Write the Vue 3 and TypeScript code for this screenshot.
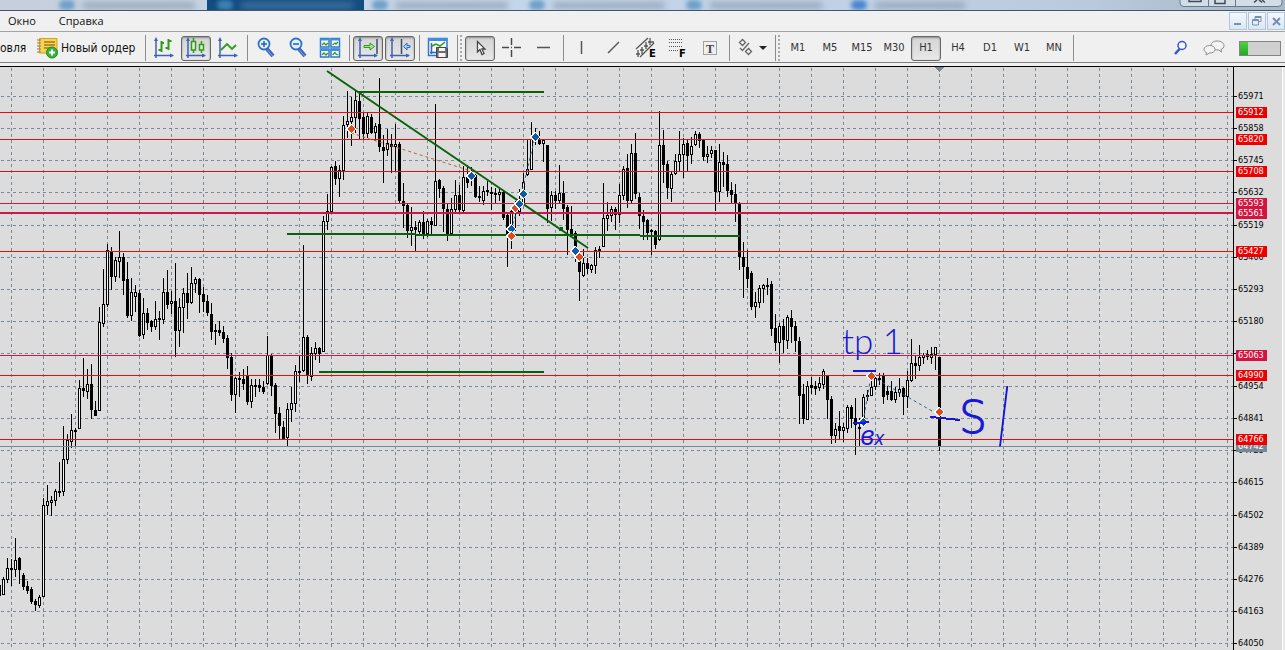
<script setup lang="ts">
import { ref } from 'vue'

type Candle = [high: number, top: number, bottom: number, low: number, up: 0 | 1]

interface Level { y: number; label: string; kind: 'red' | 'crimson' | 'slate'; wide?: boolean }
interface Marker { x: number; y: number; kind: 'sell' | 'buy' }

const menus = ['Окно', 'Справка']
const frames = ['M1', 'M5', 'M15', 'M30', 'H1', 'H4', 'D1', 'W1', 'MN']
const frame = ref('H1')

// Vertical positions are in chart space; the plot starts at 67.
const plotTop = 67
const step = 4
const firstX = -1

const candles: Candle[] = [
  [583, 585, 595, 597, 0], [577, 579, 594, 594, 1], [558, 568, 579, 582, 1], [559, 568, 569, 585, 0],
  [538, 560, 569, 576, 1], [557, 558, 569, 583, 0], [573, 575, 586, 589, 0], [581, 586, 590, 593, 0],
  [587, 589, 601, 603, 0], [599, 601, 604, 610, 0], [595, 597, 605, 607, 1], [498, 505, 596, 596, 1],
  [485, 501, 505, 514, 1], [496, 500, 502, 515, 1], [489, 491, 500, 505, 1], [462, 491, 492, 496, 0],
  [426, 459, 491, 495, 1], [434, 440, 459, 463, 1], [414, 430, 441, 447, 1], [428, 430, 431, 446, 0],
  [380, 388, 428, 428, 1], [358, 388, 390, 396, 0], [369, 384, 391, 398, 1], [364, 384, 409, 418, 0],
  [401, 410, 415, 415, 0], [307, 322, 410, 410, 1], [269, 304, 323, 326, 1], [244, 250, 304, 306, 1],
  [247, 251, 276, 289, 0], [257, 260, 276, 281, 1], [231, 257, 261, 277, 1], [253, 257, 280, 294, 0],
  [262, 279, 315, 317, 0], [278, 292, 315, 320, 1], [285, 292, 296, 311, 1], [290, 293, 335, 336, 0],
  [298, 313, 334, 338, 1], [308, 313, 322, 329, 0], [320, 321, 326, 331, 0], [301, 319, 326, 329, 1],
  [311, 318, 319, 339, 0], [278, 292, 319, 323, 1], [270, 292, 304, 308, 0], [291, 301, 303, 313, 1],
  [263, 301, 330, 356, 0], [298, 307, 330, 346, 1], [288, 293, 307, 332, 1], [273, 293, 302, 318, 0],
  [267, 283, 302, 303, 1], [277, 279, 283, 292, 1], [278, 279, 294, 312, 0], [287, 294, 301, 311, 0],
  [295, 301, 312, 315, 0], [303, 314, 331, 339, 0], [324, 330, 331, 344, 0], [321, 330, 332, 335, 0],
  [326, 332, 338, 342, 0], [335, 338, 357, 368, 0], [353, 357, 394, 400, 0], [377, 378, 394, 412, 1],
  [372, 378, 379, 396, 0], [369, 379, 383, 389, 0], [366, 375, 401, 404, 0], [379, 385, 401, 407, 1],
  [379, 385, 386, 396, 0], [379, 385, 387, 391, 0], [381, 387, 391, 393, 0], [336, 355, 383, 384, 1],
  [354, 355, 385, 395, 0], [383, 385, 413, 432, 0], [407, 413, 425, 439, 0], [421, 427, 438, 439, 0],
  [403, 409, 437, 445, 1], [387, 403, 409, 421, 1], [365, 371, 403, 411, 1], [355, 371, 372, 381, 0],
  [245, 337, 370, 371, 1], [335, 337, 375, 383, 0], [347, 353, 376, 380, 1], [342, 348, 353, 359, 1],
  [347, 348, 353, 362, 0], [216, 221, 351, 351, 1], [194, 211, 221, 229, 1], [166, 167, 211, 212, 1],
  [161, 166, 178, 184, 0], [165, 170, 178, 196, 1], [116, 125, 170, 179, 1], [91, 121, 124, 137, 1],
  [97, 117, 121, 145, 1], [91, 100, 117, 132, 1], [93, 101, 118, 139, 0], [113, 117, 133, 138, 0],
  [113, 116, 133, 137, 1], [114, 117, 132, 133, 0], [123, 126, 132, 140, 1], [78, 124, 146, 151, 0],
  [135, 147, 150, 182, 0], [129, 143, 149, 155, 1], [134, 144, 146, 172, 0], [124, 144, 146, 170, 1],
  [142, 144, 200, 202, 0], [183, 201, 205, 227, 0], [204, 205, 230, 237, 0], [207, 227, 230, 245, 1],
  [221, 227, 229, 251, 0], [220, 222, 231, 234, 1], [211, 222, 233, 238, 0], [219, 221, 233, 236, 1],
  [217, 221, 224, 233, 0], [104, 181, 225, 225, 1], [179, 180, 188, 197, 0], [186, 188, 208, 231, 0],
  [204, 209, 234, 240, 0], [198, 209, 233, 234, 1], [180, 195, 209, 211, 1], [185, 195, 209, 213, 0],
  [166, 177, 210, 212, 1], [165, 176, 182, 187, 0], [167, 174, 178, 185, 1], [174, 175, 196, 197, 0],
  [186, 196, 197, 201, 0], [186, 191, 200, 204, 1], [181, 190, 191, 195, 0], [187, 192, 193, 209, 0],
  [188, 193, 194, 203, 0], [188, 192, 194, 200, 1], [190, 192, 217, 219, 0], [213, 215, 235, 266, 0],
  [208, 211, 234, 248, 1], [201, 209, 212, 230, 1], [189, 204, 211, 215, 1], [173, 182, 203, 204, 1],
  [140, 169, 174, 175, 1], [122, 139, 169, 169, 1], [128, 138, 140, 144, 0], [131, 140, 143, 144, 0],
  [139, 140, 143, 161, 1], [145, 145, 208, 222, 0], [191, 195, 207, 220, 1], [191, 195, 200, 208, 0],
  [165, 193, 200, 203, 1], [181, 193, 208, 219, 0], [205, 207, 229, 254, 0], [206, 229, 233, 235, 0],
  [231, 233, 249, 261, 0], [252, 257, 271, 300, 0], [249, 263, 275, 276, 1], [258, 263, 268, 273, 0],
  [264, 265, 269, 272, 1], [247, 250, 265, 273, 1], [246, 249, 250, 257, 0], [183, 218, 246, 246, 1],
  [202, 215, 218, 230, 1], [206, 209, 215, 221, 1], [207, 209, 214, 229, 0], [184, 195, 214, 222, 1],
  [166, 169, 195, 199, 1], [154, 168, 200, 207, 0], [144, 153, 200, 202, 1], [133, 153, 193, 198, 0],
  [193, 197, 215, 228, 0], [210, 216, 221, 239, 0], [219, 220, 232, 239, 0], [229, 230, 231, 254, 0],
  [230, 231, 244, 248, 0], [111, 145, 239, 240, 1], [130, 145, 164, 182, 0], [161, 164, 187, 198, 0],
  [171, 174, 188, 201, 1], [154, 161, 173, 174, 1], [131, 154, 161, 171, 1], [138, 144, 154, 177, 1],
  [139, 143, 155, 171, 0], [137, 146, 154, 163, 1], [131, 134, 144, 145, 1], [132, 134, 140, 147, 0],
  [140, 140, 156, 160, 0], [146, 154, 156, 162, 1], [146, 150, 153, 157, 1], [150, 150, 191, 210, 0],
  [144, 162, 191, 201, 1], [152, 162, 164, 186, 0], [155, 164, 190, 196, 0], [182, 190, 194, 203, 0],
  [184, 194, 203, 221, 0], [202, 204, 256, 269, 0], [242, 257, 266, 297, 0], [250, 267, 278, 287, 0],
  [271, 273, 306, 309, 0], [292, 302, 306, 317, 1], [285, 288, 302, 307, 1], [284, 285, 288, 302, 1],
  [278, 285, 286, 294, 0], [281, 284, 328, 335, 0], [314, 328, 342, 350, 0], [323, 326, 342, 362, 1],
  [319, 326, 339, 352, 0], [315, 317, 340, 348, 1], [310, 318, 326, 342, 0], [321, 326, 340, 351, 0],
  [337, 341, 395, 423, 0], [384, 394, 418, 423, 0], [381, 386, 419, 419, 1], [377, 385, 387, 393, 0],
  [381, 386, 388, 394, 0], [377, 383, 387, 390, 1], [369, 371, 384, 388, 1], [375, 376, 399, 418, 0],
  [396, 399, 435, 443, 0], [423, 429, 435, 442, 1], [411, 426, 430, 438, 0], [423, 427, 430, 441, 1],
  [405, 407, 428, 432, 1], [405, 407, 418, 427, 0], [398, 418, 424, 454, 0], [418, 427, 428, 446, 0],
  [394, 397, 425, 425, 1], [390, 395, 396, 400, 0], [377, 387, 395, 395, 1], [375, 378, 386, 389, 1],
  [373, 378, 379, 384, 0], [373, 375, 396, 403, 0], [386, 391, 394, 399, 0], [381, 391, 399, 400, 0],
  [387, 392, 399, 402, 1], [378, 389, 392, 396, 1], [387, 388, 396, 414, 0], [371, 380, 396, 407, 1],
  [339, 363, 380, 381, 1], [356, 363, 365, 378, 0], [345, 357, 365, 370, 1], [353, 355, 357, 363, 1],
  [350, 354, 356, 359, 0], [347, 354, 357, 363, 1], [347, 347, 354, 369, 1], [357, 357, 446, 450, 0],
]

const scale = [
  [96, '65971'], [128, '65858'], [160, '65745'], [192, '65632'], [225, '65519'], [257, '65406'],
  [289, '65293'], [321, '65180'], [353, ''], [386, '64954'], [418, '64841'], [450, '64728'],
  [482, '64615'], [515, '64502'], [547, '64389'], [579, '64276'], [611, '64163'], [643, '64050'],
] as [number, string][]

const gridX = Array.from({ length: 80 }, (_, i) => 11 + i * 32)

const levels: Level[] = [
  { y: 446, label: '64742', kind: 'slate' },
  { y: 112, label: '65912', kind: 'red' },
  { y: 139, label: '65820', kind: 'red' },
  { y: 171, label: '65708', kind: 'red' },
  { y: 203, label: '65593', kind: 'crimson' },
  { y: 213, label: '65561', kind: 'crimson', wide: true },
  { y: 251, label: '65427', kind: 'red' },
  { y: 355, label: '65063', kind: 'crimson' },
  { y: 375, label: '64990', kind: 'red' },
  { y: 439, label: '64766', kind: 'red' },
]

const markers: Marker[] = [
  { x: 351, y: 129, kind: 'sell' }, { x: 471, y: 176, kind: 'buy' }, { x: 511, y: 229, kind: 'buy' },
  { x: 511, y: 236, kind: 'sell' }, { x: 515, y: 208, kind: 'sell' }, { x: 519, y: 204, kind: 'buy' },
  { x: 523, y: 194, kind: 'buy' }, { x: 535, y: 137, kind: 'buy' }, { x: 575, y: 251, kind: 'buy' },
  { x: 579, y: 257, kind: 'sell' }, { x: 871, y: 376, kind: 'sell' }, { x: 863, y: 422, kind: 'buy' },
  { x: 939, y: 412, kind: 'sell' },
]

const cx = (i: number) => firstX + i * step
</script>

<template>
  <div class="terminal">
    <div class="glass" aria-hidden="true">
      <span class="tab t1"><i></i><b></b></span>
      <span class="tab t2"><i></i><b></b></span>
      <span class="tab t3"><i></i><b></b></span>
      <span class="tab t3"><i></i><b></b></span>
      <span class="tab t3"><i></i><b></b></span>
      <span class="tab t4"><i></i><b></b></span>
      <span class="frost"></span>
      <svg class="caption" width="104" height="8" viewBox="0 0 104 8">
        <path d="M1 0V3Q1 6.500 5 6.500H99Q103 6.500 103 3V0M29.500 0V6M56.500 0V6" fill="#d3dde8" stroke="#66788c" />
        <path d="M10 0V1.500H22V0M36 0V3.500H46V0M75 2.500L78 0M80 0L83 2.500M83 0L86 2.500" fill="none" stroke="#3d4a58" stroke-width="1.500" />
      </svg>
    </div>

    <nav class="menu">
      <button v-for="m in menus" :key="m" type="button" class="menu-item">{{ m }}</button>
      <div class="mdi">
        <button type="button" aria-label="Свернуть"><svg width="16" height="16"><path d="M4 11h7" stroke="#7690b4" stroke-width="2" /></svg></button>
        <button type="button" aria-label="Восстановить"><svg width="16" height="16"><path d="M6 6V3.500H12V8.500H10M3.500 6.500H9.500V12H3.500ZM3.500 7.500H9.500M6 4.500H12" fill="none" stroke="#7690b4" /></svg></button>
        <button type="button" aria-label="Закрыть"><svg width="16" height="16"><path d="M5 5L12 12M12 5L5 12" stroke="#7690b4" stroke-width="2" /></svg></button>
      </div>
    </nav>

    <div class="toolbar">
      <button type="button" class="wide cut">овля</button>
      <button type="button" class="wide order">
        <svg width="22" height="22" viewBox="0 0 22 22">
          <path d="M2.500 1.500H20V16H2.500Z" fill="#f7d354" stroke="#d3a01f" />
          <path d="M0 3h4M0 6h4M0 9h4M0 12h4M0 15h4" stroke="#98793a" />
          <path d="M7 5h11M7 8h11M7 11h6" stroke="#a6781e" stroke-width="1.500" />
          <circle cx="15" cy="15.500" r="5.500" fill="#35b53a" stroke="#198b20" />
          <path d="M15 12.500V18.500M12 15.500H18" stroke="#fff" stroke-width="2" />
        </svg>
        <span>Новый ордер</span>
      </button>
      <span class="sep"></span>

      <button type="button" class="tool" aria-label="Бары">
        <svg width="22" height="22" viewBox="0 0 22 22">
          <path d="M3 2V21M1 18.500H20" stroke="#3e62b4" stroke-width="1.500" /><path d="M3 0L5 4H1ZM21 18.500L17 16.500V20.500Z" fill="#3e62b4" />
          <path d="M8.500 4V15M5.500 13H8.500M8.500 6H11M15.500 2V13M12.500 11H15.500M15.500 4H18.500" fill="none" stroke="#2f9a1c" stroke-width="2" />
        </svg>
      </button>
      <button type="button" class="tool on" aria-label="Свечи">
        <svg width="22" height="22" viewBox="0 0 22 22">
          <path d="M3 2V21M1 18.500H20" stroke="#3e62b4" stroke-width="1.500" /><path d="M3 0L5 4H1ZM21 18.500L17 16.500V20.500Z" fill="#3e62b4" />
          <path d="M8.500 1V4M8.500 13V16M16.500 4V7M16.500 13V16M6.500 4.500H10.500V13H6.500ZM14.500 7.500H18.500V13H14.500Z" fill="#dff2d8" stroke="#2f9a1c" stroke-width="1.500" />
        </svg>
      </button>
      <button type="button" class="tool" aria-label="Линия">
        <svg width="22" height="22" viewBox="0 0 22 22">
          <path d="M3 2V21M1 18.500H20" stroke="#3e62b4" stroke-width="1.500" /><path d="M3 0L5 4H1ZM21 18.500L17 16.500V20.500Z" fill="#3e62b4" />
          <path d="M4 13L10 7L15 12L19 8" fill="none" stroke="#2f9a1c" stroke-width="1.800" />
        </svg>
      </button>
      <span class="sep"></span>

      <button type="button" class="tool" aria-label="Увеличить">
        <svg width="22" height="22" viewBox="0 0 22 22">
          <path d="M12 12L18 19" stroke="#3b62b5" stroke-width="4" /><path d="M12.500 13L17.500 19" stroke="#8aa6dc" />
          <circle cx="9" cy="7" r="5.500" fill="#e1f1ff" stroke="#2f71c3" stroke-width="1.800" />
          <path d="M9 4V10M6 7H12" stroke="#2a5bb0" stroke-width="1.500" />
        </svg>
      </button>
      <button type="button" class="tool" aria-label="Уменьшить">
        <svg width="22" height="22" viewBox="0 0 22 22">
          <path d="M12 12L18 19" stroke="#3b62b5" stroke-width="4" /><path d="M12.500 13L17.500 19" stroke="#8aa6dc" />
          <circle cx="9" cy="7" r="5.500" fill="#e1f1ff" stroke="#2f71c3" stroke-width="1.800" />
          <path d="M6 7H12" stroke="#2a5bb0" stroke-width="1.500" />
        </svg>
      </button>
      <button type="button" class="tool" aria-label="Плитка">
        <svg width="22" height="22" viewBox="0 0 22 22">
          <path d="M1.500 1.500H10V10H1.500ZM12 1.500H20.500V10H12ZM1.500 12H10V20H1.500ZM12 12H20.500V20H12Z" fill="#fff" stroke="#2d78c8" stroke-width="1.500" />
          <path d="M1 2.500H10.500M11.500 2.500H21M1 13H10.500M11.500 13H21" stroke="#3c8fe0" stroke-width="2" />
          <path d="M3 8L5 6L7 8L9 6M13.500 8L16 6L17 7L19 5M3 18L5 16L7 18L9 16M13.500 18L16 15.500L17 17L19 18" fill="none" stroke="#2f9a1c" stroke-width="1.300" />
        </svg>
      </button>
      <span class="sep"></span>

      <button type="button" class="tool on" aria-label="Автопрокрутка">
        <svg width="22" height="22" viewBox="0 0 22 22">
          <path d="M3 2V21M1 18.500H20" stroke="#3e62b4" stroke-width="1.500" /><path d="M3 0L5 4H1ZM21 18.500L17 16.500V20.500Z" fill="#3e62b4" />
          <path d="M20 2V17" stroke="#3c4c66" stroke-width="1.500" />
          <path d="M7 8.500H13V6L17.500 9.500L13 13V10.500H7Z" fill="#a9e49a" stroke="#2f9a1c" />
        </svg>
      </button>
      <button type="button" class="tool on" aria-label="Сдвиг графика">
        <svg width="22" height="22" viewBox="0 0 22 22">
          <path d="M3 2V21M1 18.500H20" stroke="#3e62b4" stroke-width="1.500" /><path d="M3 0L5 4H1ZM21 18.500L17 16.500V20.500Z" fill="#3e62b4" />
          <path d="M12.500 2V17" stroke="#3c4c66" stroke-width="1.500" />
          <path d="M21 8.500H18V6L14.500 9.500L18 13V10.500H21Z" fill="#a7cdf8" stroke="#2f6fc4" />
        </svg>
      </button>
      <span class="sep"></span>
      <button type="button" class="tool" aria-label="Шаблоны">
        <svg width="22" height="22" viewBox="0 0 22 22">
          <path d="M1.500 1.500H20V18.500H1.500Z" fill="#f3f9ff" stroke="#2d78c8" stroke-width="1.500" /><path d="M1 2.500H20.500" stroke="#3c8fe0" stroke-width="3" />
          <path d="M4.500 6V17M3 15.500H9" stroke="#3e62b4" stroke-width="1.500" /><path d="M5 9L9 7L13 9L18 5" fill="none" stroke="#2f9a1c" stroke-width="1.500" />
          <path d="M9.500 10.500H19L20.500 12V20.500H9.500Z" fill="#6d6d6d" stroke="#444" /><path d="M12 11H18V14H12ZM11.500 16H18.500V20H11.500Z" fill="#f4f4f4" />
        </svg>
      </button>
      <span class="sep"></span>
      <span class="grip"></span>

      <button type="button" class="tool on" aria-label="Курсор">
        <svg width="22" height="22" viewBox="0 0 22 22"><path d="M8.500 4.500V15L11 12.500L13 17.500L15 16.500L13 12H16Z" fill="#fff" stroke="#444" stroke-width="1.300" /></svg>
      </button>
      <button type="button" class="tool" aria-label="Перекрестие">
        <svg width="22" height="22" viewBox="0 0 22 22"><path d="M10.500 1V8M10.500 13V20M1 10.500H8M13 10.500H20M10 10.500h1" stroke="#4a4a4a" stroke-width="1.500" /></svg>
      </button>
      <button type="button" class="tool" aria-label="Горизонтальная линия">
        <svg width="22" height="22" viewBox="0 0 22 22"><path d="M4 10.500H17" stroke="#555" stroke-width="1.500" /></svg>
      </button>
      <span class="sep"></span>
      <button type="button" class="tool" aria-label="Вертикальная линия">
        <svg width="22" height="22" viewBox="0 0 22 22"><path d="M10.500 4V17" stroke="#555" stroke-width="1.500" /></svg>
      </button>
      <button type="button" class="tool" aria-label="Трендовая линия">
        <svg width="22" height="22" viewBox="0 0 22 22"><path d="M5 16L16 5" stroke="#555" stroke-width="1.500" /></svg>
      </button>
      <button type="button" class="tool" aria-label="Равноудаленный канал">
        <svg width="22" height="22" viewBox="0 0 22 22">
          <path d="M1 12L13 1M5 20L19 6M3 13V20M1 17H5M7 10V17M5 13H9M11 5V12M9 9H13M15 1V8M13 5H19" fill="none" stroke="#555" stroke-width="1.300" />
          <text x="14" y="20" class="glyph">E</text>
        </svg>
      </button>
      <button type="button" class="tool" aria-label="Фибоначчи">
        <svg width="22" height="22" viewBox="0 0 22 22">
          <path d="M2 2.500H15M2 5.500H15M2 9.500H15M2 13.500H11" stroke="#555" stroke-dasharray="1 1" />
          <text x="12" y="20" class="glyph">F</text>
        </svg>
      </button>
      <button type="button" class="tool" aria-label="Текст">
        <svg width="22" height="22" viewBox="0 0 22 22">
          <rect x="4.500" y="4.500" width="13" height="13" fill="none" stroke="#555" stroke-dasharray="1 1" />
          <text x="11" y="16" text-anchor="middle" class="serif">T</text>
        </svg>
      </button>
      <span class="sep"></span>
      <button type="button" class="tool drop" aria-label="Стрелки">
        <svg width="34" height="22" viewBox="0 0 34 22">
          <path d="M4.500 4.500L7.500 1.500L10.500 4.500L7.500 7.500ZM5 10L7.500 12.500L14 5M10.500 13.500L13.500 10.500L16.500 13.500L13.500 16.500Z" transform="translate(0 1)" fill="none" stroke="#666" stroke-width="1.300" />
          <path d="M24 9H32L28 13Z" fill="#222" />
        </svg>
      </button>
      <span class="sep"></span>
      <span class="grip"></span>

      <button
        v-for="f in frames" :key="f" type="button" class="tool frame" :class="{ on: f === frame }"
        @click="frame = f"
      >{{ f }}</button>
      <span class="sep"></span>

      <div class="status">
        <button type="button" aria-label="Поиск">
          <svg width="16" height="16" viewBox="0 0 16 16">
            <path d="M2 14L7 8.500" stroke="#3159c4" stroke-width="2.500" /><circle cx="9" cy="5.500" r="4" fill="#f2f7ff" stroke="#3159c4" stroke-width="1.500" />
          </svg>
        </button>
        <button type="button" aria-label="Чат">
          <svg width="22" height="16" viewBox="0 0 22 16">
            <path d="M14 1C18 1 21 3 21 5.500C21 7.500 19.500 9 18 9.500L18.500 12L15.500 10C11 10 8 8 8 5.500C8 3 10.500 1 14 1Z" fill="#f4f4f4" stroke="#8a8a8a" />
            <path d="M6.500 5.500C10 5.500 12 7 12 9.500C12 12 9.500 13 6.500 13L3 15L3.500 12.500C2 12 1 11 1 9.500C1 7 3.500 5.500 6.500 5.500Z" fill="#f4f4f4" stroke="#8a8a8a" />
          </svg>
        </button>
        <span class="meter"><span></span></span>
      </div>
    </div>

    <main class="chart">
      <svg class="plot" role="img" aria-label="График цены, H1">
        <g :transform="`translate(0 ${-plotTop})`">
          <g class="grid">
            <line v-for="x in gridX" :key="'x' + x" :x1="x" :x2="x" :y1="plotTop" y2="2000" />
            <line v-for="[y] in scale" :key="'y' + y" x1="0" x2="100%" :y1="y" :y2="y" />
          </g>

          <g class="candles">
            <template v-for="(c, i) in candles" :key="i">
              <rect :x="cx(i)" :y="c[0]" width="1" :height="c[3] - c[0] + 1" />
              <rect :x="cx(i) - 1" :y="c[1]" width="3" :height="c[2] - c[1] + 1" />
              <rect v-if="c[4] && c[2] - c[1] > 1" class="hollow" :x="cx(i)" :y="c[1] + 1" width="1" :height="c[2] - c[1] - 1" />
            </template>
          </g>

          <rect
            v-for="l in levels" :key="l.label" x="0" :y="l.wide ? l.y - 1 : l.y" width="100%"
            :height="l.wide ? 2 : 1" :class="l.kind"
          />

          <g class="green">
            <path d="M358 92H544M319 372H544M287 234H416M416 235H640M640 236H740" />
            <path class="trend" d="M327 71L588 248" />
            <circle cx="561" cy="229" r="2" />
          </g>

          <path class="link sold" d="M351 133L471 171" />
          <path class="link bought" d="M511 230L519 204L535 137M863 422L871 376L939 415" />

          <path class="shift" d="M934 67H944L939 72Z" />

          <g v-for="(m, i) in markers" :key="i" :transform="`translate(${m.x} ${m.y})`" :class="m.kind">
            <path class="halo" d="M0 -5L5 0L0 5L-5 0Z" />
            <path d="M0 -4L4 0L0 4L-4 0Z" />
          </g>

          <g class="ink">
            <path d="M853 371H876M853 423L862 423L869 422M930 417L941 418L960 420" />
            <text x="842" y="354" class="note">tp 1</text>
            <text x="860" y="445" class="entry"><tspan class="big">в</tspan>х</text>
            <text x="959" y="433" class="stop">S</text>
            <text x="995" y="446" class="stem">l</text>
          </g>
        </g>
      </svg>

      <div class="axis">
        <template v-for="[y, label] in scale" :key="y">
          <span class="price" :style="{ top: y - plotTop - 5 + 'px' }">{{ label }}</span>
        </template>
        <span
          v-for="l in levels" :key="l.label" class="price tag" :class="l.kind"
          :style="{ top: l.y - plotTop - 5 + 'px' }"
        >{{ l.label }}</span>
      </div>
      <div class="edge"></div>
    </main>
  </div>
</template>

<style>
html, body { margin: 0; height: 100%; overflow: hidden; }
#app { height: 100%; }
</style>

<style scoped>
.terminal {
  display: flex;
  flex-direction: column;
  height: 100%;
  background: #f0f0f0;
  color: #111;
  font: 11px/16px "Open Sans", "Noto Sans", sans-serif;
}
button { border: 0; padding: 0; margin: 0; background: none; color: inherit; font: inherit; }
svg { display: block; }

.glass {
  position: relative;
  display: flex;
  flex: none;
  height: 10px;
  overflow: hidden;
  background: linear-gradient(90deg, #c6d0dc, #c4d6ea 40%, #bfd0e4 70%, #b4c4d4);
  border-bottom: 1px solid #44566f;
}
.tab { display: flex; align-items: center; gap: 8px; width: 158px; }
.tab i { width: 16px; height: 10px; border-radius: 5px; background: #6fa0c8; filter: blur(2px); }
.tab b { width: 112px; height: 5px; background: #8f9fb2; filter: blur(3px); }
.t1 { width: 148px; padding-left: 59px; }
.t2 { width: 147px; padding-left: 10px; background: #134d80; }
.t2 i { background: #3f7fb0; }
.t2 b { background: #4a7aa5; }
.t3 { width: 149px; padding-left: 8px; }
.t4 { width: 240px; padding-left: 16px; }
.t4 b { width: 90px; }
.t4 i { background: #4a86cf; }
.frost { flex: 1; background: linear-gradient(90deg, #b4c4d400, #a9b9ca); }
.caption { position: absolute; right: 2px; top: 0; }

.menu { display: flex; flex: none; height: 20px; background: #f0f0f0; border-bottom: 1px solid #a3a3a3; }
.menu-item { margin-left: 8px; margin-right: 15px; }
.mdi { display: flex; gap: 1px; margin-left: auto; padding-top: 1px; }
.mdi button { width: 18px; height: 18px; background: linear-gradient(#f3f8fd, #dbe7f5); border: 1px solid #b2c6de; }

.toolbar { display: flex; flex: none; align-items: center; height: 28px; padding-top: 2px; background: #f0f0f0; border-bottom: 1px solid #808080; }
.wide { height: 26px; white-space: nowrap; font: 12px/26px "DejaVu Sans Condensed", "DejaVu Sans", sans-serif; }
.cut { width: 37px; text-align: left; }
.order { display: flex; align-items: center; gap: 2px; width: 105px; }
.sep { flex: none; width: 1px; height: 26px; margin: 0 2px 0 3px; background: #8c8c8c; }
.grip { flex: none; width: 2px; height: 26px; margin-right: 2px; background: repeating-linear-gradient(#a8a8a8 0 2px, #f0f0f0 2px 4px); }
.tool { display: flex; flex: none; align-items: center; justify-content: center; width: 30px; height: 25px; margin: 0 1px; border: 1px solid transparent; border-radius: 3px; }
.tool.on { border-color: #666; background: linear-gradient(#d4d4d4, #e8e8e8); box-shadow: inset 0 1px 2px #8c8c8c; }
.drop { width: 38px; }
.frame { font: 11px/16px "DejaVu Sans Condensed", "DejaVu Sans", sans-serif; color: #333; }
.glyph { font: bold 10px "DejaVu Sans", sans-serif; fill: #000; }
.serif { font: bold 12px "Liberation Serif", serif; fill: #444; }
.status { display: flex; align-items: center; gap: 14px; margin-left: auto; padding-right: 4px; }
.meter { width: 40px; height: 13px; border: 1px solid #848484; background: #d0d0d0; }
.meter span { display: block; width: 8px; height: 13px; background: linear-gradient(#4dd044, #22aa26); }

.chart { display: flex; flex: 1; min-height: 0; margin-top: 3px; border-top: 1px solid #000; background: #dcdcdc; }
.plot { flex: 1; min-width: 0; height: 100%; overflow: hidden; border-right: 1px solid #000; shape-rendering: crispEdges; }
.grid line { stroke: #778899; stroke-dasharray: 3 3; transform: translate(0.5px, 0.5px); }
.candles rect { fill: #000; }
.candles .hollow { fill: #f4f4f4; }
rect.red { fill: #e01010; }
rect.crimson { fill: #c8194b; }
rect.slate { fill: #778899; }
.green path { fill: none; stroke: #0b610b; stroke-width: 2; }
.green .trend { shape-rendering: geometricPrecision; }
.green circle { fill: #0b610b; }
.link { fill: none; stroke-dasharray: 3 3; shape-rendering: geometricPrecision; }
.sold { stroke: #d05838; }
.bought { stroke: #29638e; }
.shift { fill: #778899; }
.sell path { fill: #e2481f; }
.buy path { fill: #0e5aa8; }
.sell .halo, .buy .halo { fill: #fff; stroke: #fff; }
.ink path { fill: none; stroke: #1616d8; stroke-width: 2; }
.ink text { fill: #1616d8; stroke: #1616d8; stroke-width: 0; font-family: Lato, "Open Sans", sans-serif; font-weight: 300; }
.ink .note { font-size: 35px; }
.ink .entry { font: italic 20px "Open Sans", sans-serif; }
.ink .big { font-size: 27px; }
.ink .stop { font-family: "DejaVu Sans", sans-serif; font-size: 44px; font-weight: 200; stroke-width: 1; }
.ink .stem { font-size: 82px; font-style: italic; font-weight: 100; stroke-width: 1; }

.axis { position: relative; flex: none; width: 48px; overflow: hidden; }
.price { position: absolute; left: 0; width: 29px; padding-left: 4px; color: #000; font: 9px/11px "DejaVu Sans Condensed", "DejaVu Sans", sans-serif; }
.price::before { content: ""; position: absolute; left: 0; top: 5px; width: 3px; height: 1px; background: #000; }
.price.tag { left: 2px; padding-left: 2px; color: #fff; }
.price.tag::before { content: none; }
.tag.red { background: #ee0000; }
.tag.crimson { background: #d3143f; }
.tag.slate { background: #778899; }
.edge { flex: none; width: 2px; border-left: 1px solid #fff; background: #e8e8e8; }
</style>
